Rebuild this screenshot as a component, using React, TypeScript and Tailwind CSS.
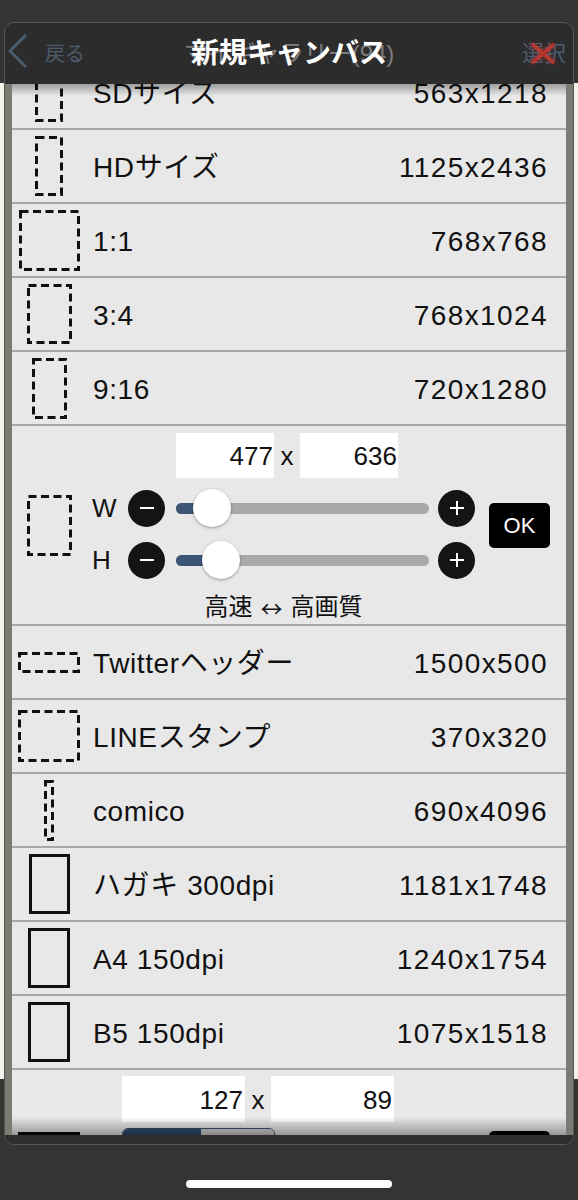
import React from "react";

function Frame({ w, h, dashed = true }: { w: number; h: number; dashed?: boolean }) {
  return (
    <svg width={w} height={h} viewBox={`0 0 ${w} ${h}`} className="block">
      <rect
        x={1.5}
        y={1.5}
        width={w - 3}
        height={h - 3}
        fill="none"
        stroke="#111"
        strokeWidth={3}
        strokeDasharray={dashed ? "8 4.5" : undefined}
      />
    </svg>
  );
}

function Row({ label, value, icon }: { label: string; value: string; icon: React.ReactNode }) {
  return (
    <div className="flex h-[74px] shrink-0 items-center border-b-2 border-[#a8a8a8]">
      <div className="flex w-[74px] justify-center">{icon}</div>
      <span className="ml-[7px] pt-[3px] text-[28px] leading-[32px] tracking-[0.6px] text-[#111]">{label}</span>
      <span className="ml-auto mr-[18px] pt-[3px] text-[28px] leading-[32px] tracking-[1.4px] text-[#111]">{value}</span>
    </div>
  );
}

function Circle({ plus }: { plus?: boolean }) {
  return (
    <div className="relative flex h-[37px] w-[37px] shrink-0 items-center justify-center rounded-full bg-[#141414]">
      <div className="h-[2px] w-[14px] bg-white" />
      {plus && <div className="absolute h-[14px] w-[2px] bg-white" />}
    </div>
  );
}

function Slider({ label, fill, thumb }: { label: string; fill: string; thumb: string }) {
  return (
    <div className="flex h-[38px] items-center">
      <span className="w-[36px] text-[26px] leading-[30px] text-[#111]">{label}</span>
      <Circle />
      <div className="relative ml-[11px] h-[11px] w-[253px] rounded-full bg-[#a9a9a9]">
        <div className={`h-full rounded-full bg-[#3c5577] ${fill}`} />
        <div
          className={`absolute top-1/2 h-[38px] w-[38px] -translate-y-1/2 rounded-full bg-white shadow-[0_1px_3px_rgba(0,0,0,0.35)] ${thumb}`}
        />
      </div>
      <div className="ml-[9px]">
        <Circle plus />
      </div>
    </div>
  );
}

function CustomRow() {
  return (
    <div className="flex h-[200px] shrink-0 items-center border-b-2 border-[#a8a8a8]">
      <div className="flex w-[74px] justify-center">
        <Frame w={45} h={61} />
      </div>
      <div className="ml-[6px] flex w-[383px] flex-col self-start pt-[7px]">
        <div className="flex h-[45px] items-center pl-[84px]">
          <div className="flex h-[45px] w-[98px] items-center justify-end bg-white pr-[1px] pt-[2px] text-[26px] text-[#111]">477</div>
          <span className="w-[26px] pt-[2px] text-center text-[26px] text-[#111]">x</span>
          <div className="flex h-[45px] w-[98px] items-center justify-end bg-white pr-[1px] pt-[2px] text-[26px] text-[#111]">636</div>
        </div>
        <div className="mt-[11px]">
          <Slider label="W" fill="w-[36px]" thumb="left-[17px]" />
        </div>
        <div className="mt-[14px]">
          <Slider label="H" fill="w-[45px]" thumb="left-[26px]" />
        </div>
        <div className="mt-[14px] flex items-center justify-center text-[24px] leading-[28px] text-[#111]">
          <span>高速</span>
          <span className="mx-[8px] font-['Noto_Sans_CJK_JP',sans-serif] text-[22px]">↔</span>
          <span>高画質</span>
        </div>
      </div>
      <div className="ml-[14px] flex h-[45px] w-[61px] items-center justify-center rounded-[5px] bg-black text-[22px] text-white">
        OK
      </div>
    </div>
  );
}

function CustomRow2() {
  return (
    <div className="flex h-[200px] shrink-0 flex-col pt-[6px]">
      <div className="flex h-[46px] items-center pl-[110px]">
        <div className="flex h-[46px] w-[123px] items-center justify-end bg-white pr-[2px] pt-[2px] text-[26px] text-[#111]">127</div>
        <span className="w-[26px] pt-[2px] text-center text-[26px] text-[#111]">x</span>
        <div className="flex h-[46px] w-[123px] items-center justify-end bg-white pr-[2px] pt-[2px] text-[26px] text-[#111]">89</div>
      </div>
      <div className="mt-[6px] flex items-start">
        <div className="flex w-[74px] justify-center pt-[4px]">
          <div className="h-[40px] w-[62px] border-[3px] border-black" />
        </div>
        <div className="ml-[36px] flex h-[36px] w-[153px] overflow-hidden rounded-[6px] border border-[#3b4f6b]">
          <div className="w-[78px] bg-[#2e4a6e]" />
          <div className="flex-1 bg-[#d2d2d2]" />
        </div>
        <div className="ml-auto mr-[16px] mt-[3px] h-[45px] w-[61px] rounded-[5px] bg-black" />
      </div>
    </div>
  );
}

export default function App() {
  return (
    <div
      className="flex h-[1200px] w-[578px] flex-col overflow-hidden bg-[linear-gradient(to_bottom,#353432_83px,#f4f3ea_83px,#f4f3ea_1079px,#353432_1079px)] font-['Liberation_Sans','Noto_Sans_CJK_JP',sans-serif]"
    >
      <div className="mx-[4px] mt-[22px] flex h-[1123px] flex-col overflow-hidden rounded-[10px] border border-[#575755] bg-[#2c2c2c]">
        {/* Header */}
        <div className="grid h-[61px] shrink-0 grid-cols-[1fr_auto_1fr] items-center">
          <div className="flex items-center">
            <svg width="22" height="36" viewBox="0 0 22 36" className="mb-[5px] ml-[2px]">
              <polyline points="19,2 3,18 19,34" fill="none" stroke="#4a5b6b" strokeWidth="3" />
            </svg>
            <span className="ml-[16px] text-[20px] leading-[24px] text-[#4c5d6d]">戻る</span>
          </div>
          <div className="grid items-center justify-items-center">
            <span className="col-start-1 row-start-1 text-[24px] leading-[30px] text-[#7c7c7c]">マイギャラリー(94)</span>
            <span className="col-start-1 row-start-1 text-[28px] font-bold leading-[30px] text-white">新規キャンバス</span>
          </div>
          <div className="flex justify-end pr-[7px]">
            <span className="relative text-[22px] leading-[24px] text-[#4c5d6d]">
              選択
              <svg
                width="26"
                height="23"
                viewBox="0 0 26 23"
                className="absolute left-[8px] top-[0px] opacity-80 drop-shadow-[0_0_2px_rgba(255,40,40,0.7)]"
              >
                <line x1="2" y1="2" x2="24" y2="21" stroke="#d8362b" strokeWidth="3.5" />
                <line x1="24" y1="2" x2="2" y2="21" stroke="#d8362b" strokeWidth="3.5" />
              </svg>
            </span>
          </div>
        </div>

        {/* Body */}
        <div className="flex h-[1051px] shrink-0">
          <div className="w-[7px] bg-[#7b7b74]" />
          <div className="relative flex-1 overflow-hidden bg-[#e8e8e8]">
            <div className="-mt-[28px] flex flex-col">
              <Row label="SDサイズ" value="563x1218" icon={<Frame w={28} h={60} />} />
              <Row label="HDサイズ" value="1125x2436" icon={<Frame w={28} h={60} />} />
              <Row label="1:1" value="768x768" icon={<Frame w={61} h={61} />} />
              <Row label="3:4" value="768x1024" icon={<Frame w={45} h={60} />} />
              <Row label="9:16" value="720x1280" icon={<Frame w={35} h={61} />} />
              <CustomRow />
              <Row label="Twitterヘッダー" value="1500x500" icon={<Frame w={62} h={21} />} />
              <Row label="LINEスタンプ" value="370x320" icon={<Frame w={62} h={52} />} />
              <Row label="comico" value="690x4096" icon={<Frame w={10} h={61} />} />
              <Row label="ハガキ 300dpi" value="1181x1748" icon={<Frame w={41} h={60} dashed={false} />} />
              <Row label="A4 150dpi" value="1240x1754" icon={<Frame w={42} h={60} dashed={false} />} />
              <Row label="B5 150dpi" value="1075x1518" icon={<Frame w={42} h={60} dashed={false} />} />
              <CustomRow2 />
            </div>
            <div className="absolute left-0 right-0 top-0 h-[12px] bg-gradient-to-b from-[rgba(0,0,0,0.32)] to-transparent" />
            <div className="absolute bottom-0 left-0 right-0 h-[18px] bg-gradient-to-t from-[rgba(0,0,0,0.35)] to-transparent" />
          </div>
          <div className="w-[7px] bg-[#7b7b74]" />
        </div>
        <div className="h-[9px] shrink-0 bg-[#2e2e2e]" />
      </div>
      <div className="mx-auto mt-[35px] h-[8px] w-[206px] rounded-full bg-white" />
    </div>
  );
}
